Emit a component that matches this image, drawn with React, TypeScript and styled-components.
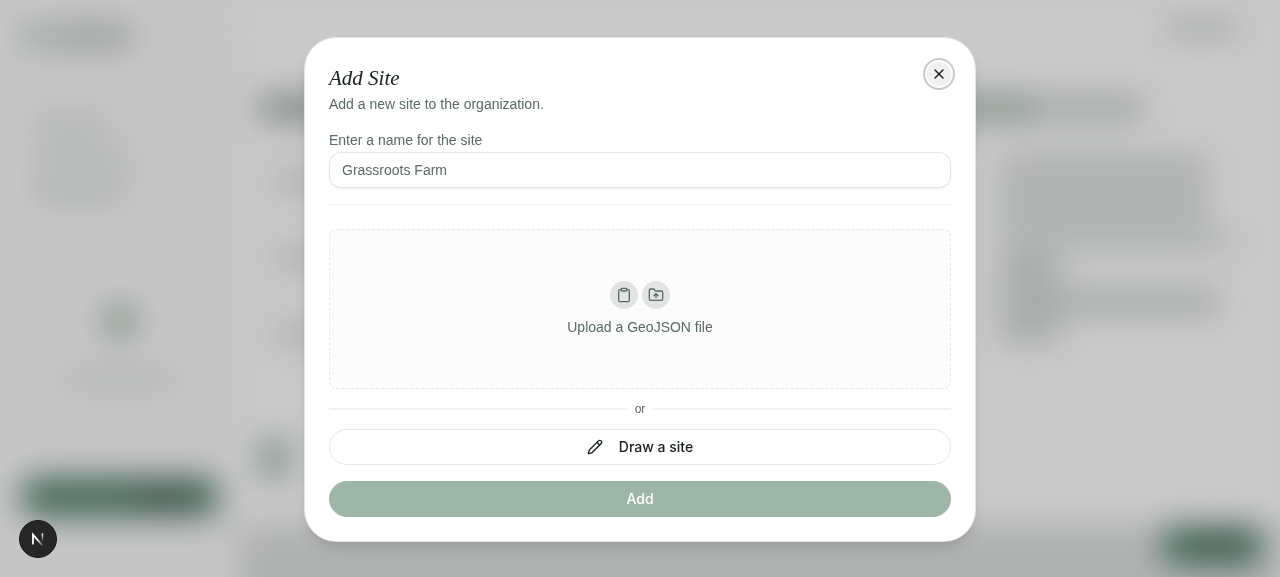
import React from "react";
import styled, { createGlobalStyle } from "styled-components";
import { X, Clipboard, FolderUp, Pencil } from "lucide-react";

const GlobalStyle = createGlobalStyle`
  * { box-sizing: border-box; }
  body { margin: 0; background: #c7c7c7; font-family: "Liberation Sans", Arial, sans-serif; }
  button, input { font: inherit; }
`;

const Backdrop = styled.div`
  position: fixed;
  inset: 0;
  overflow: hidden;
`;

const Shell = styled.div`
  display: grid;
  grid-template-columns: 240px 1fr;
  height: calc(100vh + 40px);
  filter: blur(16px);
`;

const Sidebar = styled.aside`
  display: flex;
  flex-direction: column;
  gap: 16px;
  padding: 24px 20px;
  background: #c5c5c5;
`;

const Bar = styled.div<{ $w?: string; $h: number; $color: string; $round?: boolean }>`
  flex: none;
  width: ${(p) => p.$w ?? "100%"};
  height: ${(p) => p.$h}px;
  background: ${(p) => p.$color};
  border-radius: ${(p) => (p.$round ? "999px" : "4px")};
`;

const Row = styled.div<{ $end?: boolean }>`
  display: flex;
  align-items: center;
  gap: 4px;
  justify-content: ${(p) => (p.$end ? "flex-end" : "flex-start")};
`;

const NavList = styled.div`
  display: flex;
  flex-direction: column;
  gap: 12px;
  padding: 48px 12px 0;
`;

const Status = styled.div`
  display: flex;
  flex-direction: column;
  align-items: center;
  gap: 32px;
  margin-top: auto;
  margin-bottom: 72px;
`;

const SolidPill = styled.div<{ $w?: string }>`
  display: flex;
  flex: none;
  align-items: center;
  justify-content: flex-end;
  width: ${(p) => p.$w ?? "100%"};
  height: 40px;
  padding: 0 24px;
  border-radius: 20px;
  background: #47695a;
`;

const SidebarFoot = styled.div`
  height: 60px;
`;

const Main = styled.div`
  display: flex;
  flex-direction: column;
  background: #c9c9c9;
`;

const TopBar = styled.div`
  padding: 20px 40px 20px 0;
`;

const Columns = styled.div`
  display: flex;
  flex: 1;
  justify-content: space-between;
  padding: 40px 30px 0 20px;
`;

const ListColumn = styled.div`
  display: flex;
  flex-direction: column;
  gap: 48px;
  width: 240px;
`;

const ListRows = styled.div`
  display: flex;
  flex-direction: column;
  gap: 48px;
  padding: 0 12px 40px;
`;

const DetailColumn = styled.div`
  display: flex;
  flex-direction: column;
  gap: 32px;
  width: 310px;
`;

const Paragraph = styled.div`
  display: flex;
  flex-direction: column;
  padding-left: 60px;
`;

const BottomBar = styled.div`
  display: flex;
  justify-content: flex-end;
  align-items: flex-start;
  height: 92px;
  padding: 0 16px;
  background: #afb2b1;
`;

const Overlay = styled.div`
  position: fixed;
  inset: 0;
  display: flex;
  align-items: center;
  justify-content: center;
  padding: 17px 16px 16px;
`;

const Dialog = styled.section`
  position: relative;
  display: flex;
  flex-direction: column;
  gap: 16px;
  width: 100%;
  max-width: 672px;
  padding: 24px;
  border: 1px solid #e2e4e3;
  border-radius: 32px;
  background: #fff;
  color: #5a6b63;
  font-size: 14px;
  line-height: 20px;
  box-shadow: 0 10px 15px -3px rgba(0, 0, 0, 0.1), 0 4px 6px -4px rgba(0, 0, 0, 0.1);
`;

const Title = styled.h2`
  margin: 0;
  color: #17201c;
  font: italic 400 21px/32px "Liberation Serif", serif;
`;

const Description = styled.p`
  margin: 0;
`;

const CloseButton = styled.button`
  position: absolute;
  top: 22px;
  right: 22px;
  display: grid;
  place-items: center;
  width: 28px;
  height: 28px;
  padding: 0;
  border: 2px solid #fff;
  border-radius: 50%;
  background: #f1f1f1;
  color: #17201c;
  box-shadow: 0 0 0 2px #c8c8c8;
`;

const Field = styled.div`
  display: flex;
  flex-direction: column;
  gap: 2px;
`;

const TextInput = styled.input`
  width: 100%;
  height: 36px;
  padding: 0 12px;
  border: 1px solid #e5e6e6;
  border-radius: 12px;
  background: #fff;
  color: #17201c;
  box-shadow: 0 1px 2px rgba(0, 0, 0, 0.08);
  &::placeholder { color: #5a6b63; opacity: 1; }
`;

const Divider = styled.hr`
  width: 100%;
  margin: 0 0 8px;
  border: 0;
  border-top: 1px solid #f0f1f1;
`;

const DropZone = styled.button`
  display: flex;
  flex-direction: column;
  align-items: center;
  justify-content: center;
  gap: 8px;
  height: 160px;
  padding: 0;
  border: 1px dashed #e6e7e7;
  border-radius: 8px;
  background: #fcfcfc;
  color: inherit;
`;

const IconDisc = styled.span`
  display: grid;
  place-items: center;
  width: 28px;
  height: 28px;
  border-radius: 50%;
  background: #e2e4e4;
`;

const Choices = styled.div`
  display: flex;
  flex-direction: column;
  gap: 12px;
`;

const OrLine = styled.div`
  display: flex;
  align-items: center;
  gap: 8px;
  font-size: 12px;
  line-height: 16px;
  &::before, &::after { content: ""; flex: 1; height: 2px; background: #f2f2f2; }
`;

const PillButton = styled.button<{ $filled?: boolean }>`
  display: flex;
  align-items: center;
  justify-content: center;
  gap: 16px;
  height: 36px;
  padding: 0 16px;
  border: 1px solid ${(p) => (p.$filled ? "#9eb6a8" : "#e5e6e6")};
  border-radius: 18px;
  background: ${(p) => (p.$filled ? "#9eb6a8" : "#fff")};
  color: ${(p) => (p.$filled ? "#fff" : "#17201c")};
  font-family: Inter, sans-serif;
  font-weight: 500;
`;

const DevBadge = styled.button`
  position: fixed;
  left: 19px;
  bottom: 19px;
  display: grid;
  place-items: center;
  width: 38px;
  height: 38px;
  padding: 0;
  border: 1px solid #1a1a1a;
  border-radius: 50%;
  background: #262626;
`;

const soft = "#b2b6b4";
const mid = "#9fa5a2";

export default function App() {
  return (
    <>
      <GlobalStyle />
      <Backdrop aria-hidden="true">
        <Shell>
          <Sidebar>
            <Row>
              <Bar $w="24px" $h={24} $color="#93a39a" $round />
              <Bar $w="84px" $h={24} $color="#999f9c" />
            </Row>
            <NavList>
              <Bar $w="76px" $h={20} $color={soft} />
              <Bar $w="100px" $h={20} $color={soft} />
              <Bar $w="96px" $h={28} $color={soft} />
            </NavList>
            <Status>
              <Bar $w="32px" $h={32} $color="#7a9084" $round />
              <Bar $w="112px" $h={20} $color={soft} />
            </Status>
            <SolidPill>
              <Bar $w="64px" $h={16} $color="#434f4a" />
            </SolidPill>
            <SidebarFoot />
          </Sidebar>
          <Main>
            <TopBar>
              <Row $end>
                <Bar $w="76px" $h={16} $color={mid} />
              </Row>
            </TopBar>
            <Columns>
              <ListColumn>
                <Bar $h={24} $color="#7c8581" />
                <ListRows>
                  <Bar $h={28} $color={soft} />
                  <Bar $h={28} $color={soft} />
                  <Bar $h={28} $color={soft} />
                </ListRows>
                <Bar $w="28px" $h={44} $color="#7d9086" $round />
              </ListColumn>
              <DetailColumn>
                <Row>
                  <Bar $w="100px" $h={24} $color="#84928a" />
                  <Bar $w="100px" $h={24} $color={mid} />
                </Row>
                <Paragraph>
                  <Bar $w="208px" $h={80} $color="#b0b3b2" />
                  <Bar $w="240px" $h={20} $color={soft} />
                  <Bar $w="60px" $h={36} $color="#a8adaa" />
                  <Bar $w="220px" $h={28} $color="#a8adaa" />
                  <Bar $w="60px" $h={28} $color="#a8adaa" />
                </Paragraph>
              </DetailColumn>
            </Columns>
            <BottomBar>
              <SolidPill $w="104px">
                <Bar $w="40px" $h={12} $color="#434f4a" />
              </SolidPill>
            </BottomBar>
          </Main>
        </Shell>
      </Backdrop>
      <Overlay>
        <Dialog role="dialog" aria-modal="true" aria-labelledby="dialog-title">
          <header>
            <Title id="dialog-title">Add Site</Title>
            <Description>Add a new site to the organization.</Description>
          </header>
          <Field>
            <label htmlFor="site-name">Enter a name for the site</label>
            <TextInput id="site-name" placeholder="Grassroots Farm" />
          </Field>
          <Divider />
          <Choices>
            <DropZone type="button">
              <Row>
                <IconDisc><Clipboard size={16} /></IconDisc>
                <IconDisc><FolderUp size={16} /></IconDisc>
              </Row>
              <span>Upload a GeoJSON file</span>
            </DropZone>
            <OrLine>or</OrLine>
            <PillButton type="button"><Pencil size={16} />Draw a site</PillButton>
          </Choices>
          <PillButton type="button" $filled>Add</PillButton>
          <CloseButton type="button" aria-label="Close"><X size={16} /></CloseButton>
        </Dialog>
      </Overlay>
      <DevBadge type="button" aria-label="Open developer tools">
        <svg width="18" height="18" viewBox="0 0 18 18" fill="none">
          <defs>
            <linearGradient id="stem" x1="0" y1="3" x2="0" y2="12" gradientUnits="userSpaceOnUse">
              <stop stopColor="#fff" />
              <stop offset="1" stopColor="#fff" stopOpacity="0" />
            </linearGradient>
            <linearGradient id="slash" x1="9" y1="9" x2="14" y2="16" gradientUnits="userSpaceOnUse">
              <stop stopColor="#fff" />
              <stop offset="1" stopColor="#fff" stopOpacity="0.1" />
            </linearGradient>
          </defs>
          <path d="M4 14.5V4.6L13.5 15.6" stroke="url(#slash)" strokeWidth="1.8" />
          <path d="M13.4 3.4v9" stroke="url(#stem)" strokeWidth="1.6" />
        </svg>
      </DevBadge>
    </>
  );
}
